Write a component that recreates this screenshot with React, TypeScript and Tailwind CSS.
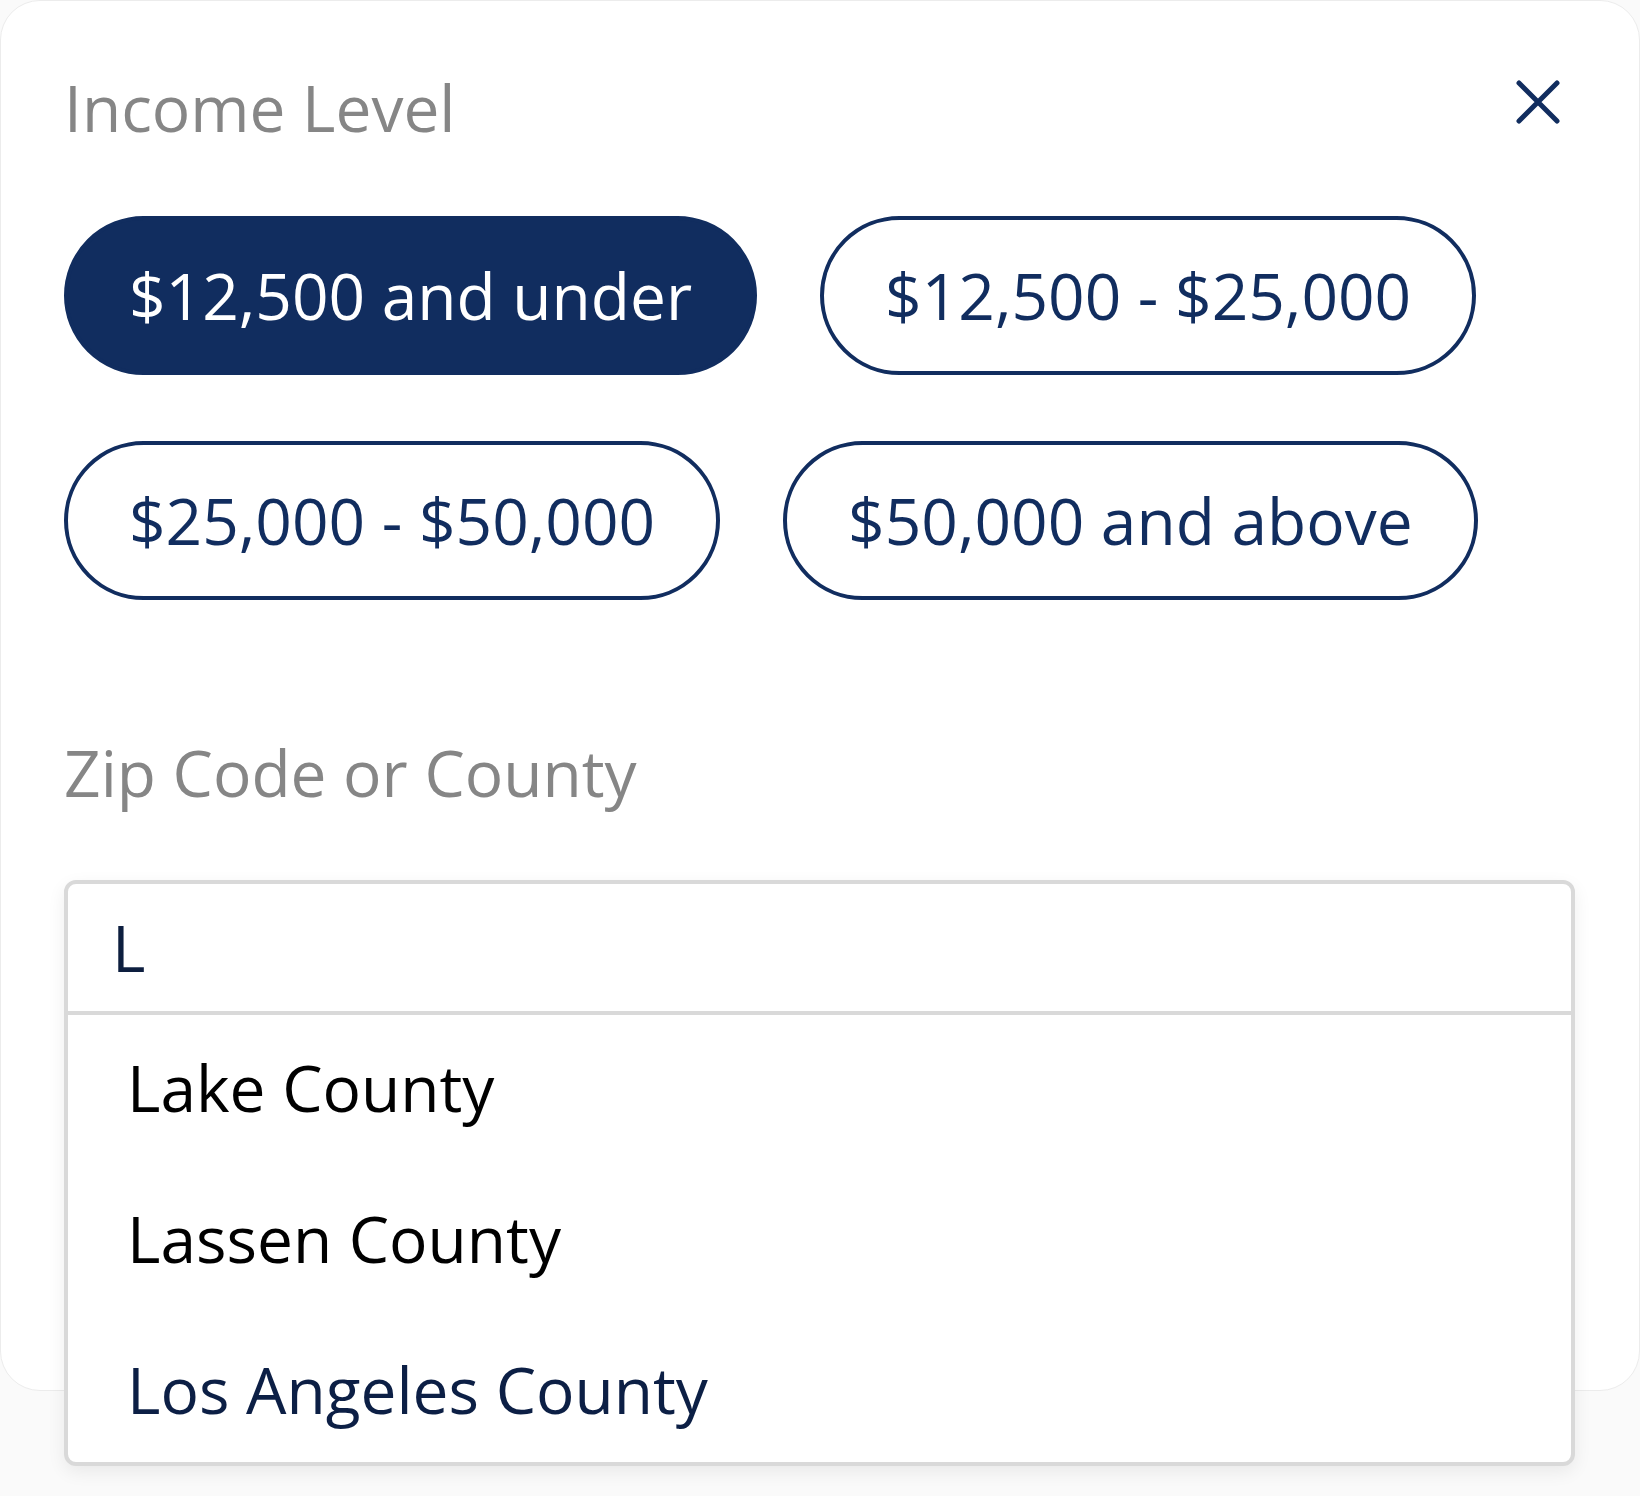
import React, { useState } from "react";

const NAVY = "#112d5f";

const INCOME_LEVELS = [
  "$12,500 and under",
  "$12,500 - $25,000",
  "$25,000 - $50,000",
  "$50,000 and above",
];

const COUNTIES = [
  { name: "Lake County", active: false },
  { name: "Lassen County", active: false },
  { name: "Los Angeles County", active: true },
];

/**
 * Close icon (X)
 */
function CloseIcon() {
  return (
    <svg width="44" height="44" viewBox="0 0 44 44" fill="none">
      <path
        d="M3 3L41 41M41 3L3 41"
        stroke={NAVY}
        strokeWidth="5"
        strokeLinecap="round"
      />
    </svg>
  );
}

export default function App() {
  const [selected, setSelected] = useState(0);
  const [query, setQuery] = useState("L");

  return (
    <div
      className="min-h-screen w-full bg-[#fafafa]"
      style={{ fontFamily: '"Open Sans", "Noto Sans", sans-serif' }}
    >
      <div className="h-[1391px] w-full rounded-[40px] border border-[#ececec] bg-white pl-[63px] pr-[64px] pt-[63px]">
        {/* Header */}
        <div className="flex items-start justify-between">
          <h2 className="text-[64px] leading-[87px] font-normal text-[#868686]">
            Income Level
          </h2>
          <button className="mr-[15px] mt-[16px]" aria-label="Close">
            <CloseIcon />
          </button>
        </div>

        {/* Income pills */}
        <div className="mt-[65px] flex flex-wrap gap-x-[63px] gap-y-[66px]">
          {INCOME_LEVELS.map((label, i) => (
            <button
              key={label}
              onClick={() => setSelected(i)}
              className={`inline-flex h-[159px] items-center rounded-full border-4 border-[#112d5f] px-[61px] text-[64px] leading-[87px] whitespace-nowrap ${
                selected === i
                  ? "bg-[#112d5f] text-white"
                  : "bg-white text-[#112d5f]"
              }`}
            >
              {label}
            </button>
          ))}
        </div>

        {/* Zip / County */}
        <div className="mt-[129px] text-[64px] leading-[87px] text-[#868686]">
          Zip Code or County
        </div>

        <div className="mt-[64px] rounded-xl border-4 border-[#d9d9d9] bg-white shadow-[0_6px_18px_rgba(0,0,0,0.07)]">
          <div className="border-b-4 border-[#d9d9d9] py-[20px] pl-[44px] pr-[42px]">
            <input
              value={query}
              onChange={(e) => setQuery(e.target.value)}
              className="w-full bg-transparent text-[64px] leading-[87px] text-[#0d1e3f] outline-none"
            />
          </div>
          <ul className="flex flex-col gap-[64px] pt-[29px] pb-[29px] pl-[59px]">
            {COUNTIES.map((c) => (
              <li
                key={c.name}
                className={`text-[64px] leading-[87px] ${
                  c.active ? "text-[#0c1f45]" : "text-black"
                }`}
              >
                {c.name}
              </li>
            ))}
          </ul>
        </div>
      </div>
    </div>
  );
}
